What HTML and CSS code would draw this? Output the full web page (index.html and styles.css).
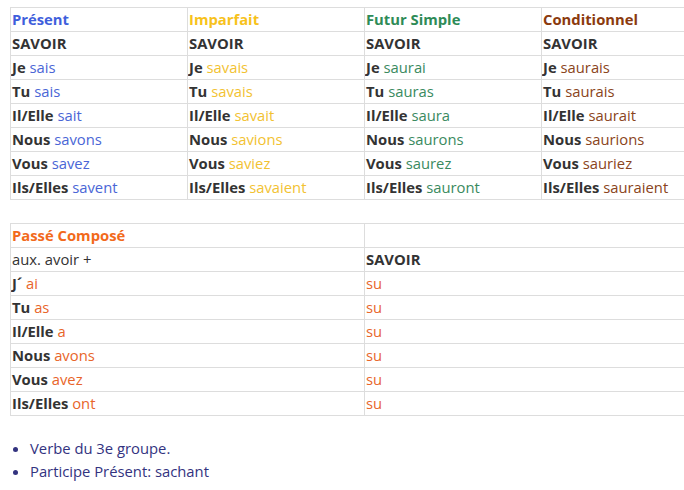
FILE: index.html
```html
<!DOCTYPE html>
<html lang="fr">
<head>
<meta charset="utf-8">
<link rel="stylesheet" href="styles.css">
</head>
<body>
<div class="page">
  <table class="conj conj-main">
    <tr>
      <th class="t-present">Présent</th>
      <th class="t-imparfait">Imparfait</th>
      <th class="t-futur">Futur Simple</th>
      <th class="t-cond last">Conditionnel</th>
    </tr>
    <tr>
      <td><b>SAVOIR</b></td><td><b>SAVOIR</b></td><td><b>SAVOIR</b></td><td><b>SAVOIR</b></td>
    </tr>
    <tr>
      <td><b>Je</b> <span class="c-present">sais</span></td>
      <td><b>Je</b> <span class="c-imparfait">savais</span></td>
      <td><b>Je</b> <span class="c-futur">saurai</span></td>
      <td><b>Je</b> <span class="c-cond">saurais</span></td>
    </tr>
    <tr>
      <td><b>Tu</b> <span class="c-present">sais</span></td>
      <td><b>Tu</b> <span class="c-imparfait">savais</span></td>
      <td><b>Tu</b> <span class="c-futur">sauras</span></td>
      <td><b>Tu</b> <span class="c-cond">saurais</span></td>
    </tr>
    <tr>
      <td><b>Il/Elle</b> <span class="c-present">sait</span></td>
      <td><b>Il/Elle</b> <span class="c-imparfait">savait</span></td>
      <td><b>Il/Elle</b> <span class="c-futur">saura</span></td>
      <td><b>Il/Elle</b> <span class="c-cond">saurait</span></td>
    </tr>
    <tr>
      <td><b>Nous</b> <span class="c-present">savons</span></td>
      <td><b>Nous</b> <span class="c-imparfait">savions</span></td>
      <td><b>Nous</b> <span class="c-futur">saurons</span></td>
      <td><b>Nous</b> <span class="c-cond">saurions</span></td>
    </tr>
    <tr>
      <td><b>Vous</b> <span class="c-present">savez</span></td>
      <td><b>Vous</b> <span class="c-imparfait">saviez</span></td>
      <td><b>Vous</b> <span class="c-futur">saurez</span></td>
      <td><b>Vous</b> <span class="c-cond">sauriez</span></td>
    </tr>
    <tr>
      <td><b>Ils/Elles</b> <span class="c-present">savent</span></td>
      <td><b>Ils/Elles</b> <span class="c-imparfait">savaient</span></td>
      <td><b>Ils/Elles</b> <span class="c-futur">sauront</span></td>
      <td><b>Ils/Elles</b> <span class="c-cond">sauraient</span></td>
    </tr>
  </table>

  <table class="conj conj-pc">
    <tr>
      <th class="t-pc">Passé Composé</th>
      <th class="last"></th>
    </tr>
    <tr><td>aux. avoir +</td><td><b>SAVOIR</b></td></tr>
    <tr><td><b>J´</b> <span class="c-pc">ai</span></td><td class="c-pc">su</td></tr>
    <tr><td><b>Tu</b> <span class="c-pc">as</span></td><td class="c-pc">su</td></tr>
    <tr><td><b>Il/Elle</b> <span class="c-pc">a</span></td><td class="c-pc">su</td></tr>
    <tr><td><b>Nous</b> <span class="c-pc">avons</span></td><td class="c-pc">su</td></tr>
    <tr><td><b>Vous</b> <span class="c-pc">avez</span></td><td class="c-pc">su</td></tr>
    <tr><td><b>Ils/Elles</b> <span class="c-pc">ont</span></td><td class="c-pc">su</td></tr>
  </table>

  <ul class="notes">
    <li>Verbe du 3e groupe.</li>
    <li>Participe Présent: sachant</li>
  </ul>
</div>
</body>
</html>
```

FILE: styles.css
```css
html, body {
  margin: 0;
  padding: 0;
  background: #fff;
}
body {
  font-family: "Open Sans", "Noto Sans", sans-serif;
  font-size: 14.8px;
  color: #333;
}
.page {
  padding: 7px 0 0 10px;
}
.conj {
  border-collapse: collapse;
  table-layout: fixed;
  width: 674px;
}
.conj th, .conj td {
  border: 1px solid #ddd;
  height: 21px;
  padding: 0 1px 2px;
  text-align: left;
  vertical-align: middle;
  line-height: 20px;
  white-space: nowrap;
  overflow: hidden;
}
.conj th:last-child, .conj td:last-child { border-right: none; }
.conj th { font-weight: bold; }
.conj b { font-weight: bold; color: #333; }
.conj-main th { width: 174px; }
.conj-main th.last { width: auto; }
.conj-pc { margin-top: 23px; }
.conj-pc th { width: 351px; }
.conj-pc th.last { width: auto; }

.t-present { color: #3f5fdc; }
.c-present { color: #4a66d6; }
.t-imparfait { color: #f7c21c; }
.c-imparfait { color: #f2c232; }
.t-futur { color: #2e8b57; }
.c-futur { color: #3a8a60; }
.t-cond { color: #8b3a0e; }
.c-cond { color: #8a4420; }
.t-pc { color: #f26a1b; }
.c-pc { color: #e8652a; }

.notes {
  margin: 21px 0 0 0;
  padding-left: 20px;
  color: #33337f;
  line-height: 23px;
}
```
